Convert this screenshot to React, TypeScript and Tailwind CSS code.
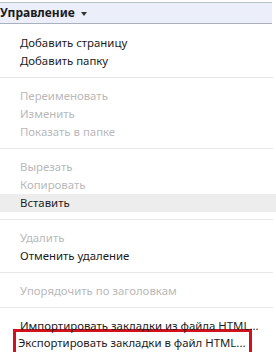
import React from "react";

type Item = { label: string; disabled?: boolean; hover?: boolean };

const groups: Item[][] = [
  [{ label: "Добавить страницу" }, { label: "Добавить папку" }],
  [
    { label: "Переименовать", disabled: true },
    { label: "Изменить", disabled: true },
    { label: "Показать в папке", disabled: true },
  ],
  [
    { label: "Вырезать", disabled: true },
    { label: "Копировать", disabled: true },
    { label: "Вставить", hover: true },
  ],
  [{ label: "Удалить", disabled: true }, { label: "Отменить удаление" }],
  [{ label: "Упорядочить по заголовкам", disabled: true }],
];

function Row({ item }: { item: Item }) {
  return (
    <div
      className={
        "h-[18px] leading-[18px] pl-[20px] whitespace-nowrap " +
        (item.disabled ? "text-[#b9b9b9] " : "text-[#1c1c1c] ") +
        (item.hover ? "bg-[#ededed]" : "")
      }
    >
      {item.label}
    </div>
  );
}

function Sep() {
  return <div className="mt-[7px] mb-[9px] h-px bg-[#e6e6e6] mr-[3px]" />;
}

export default function App() {
  return (
    <div
      className="w-[276px] h-[352px] overflow-hidden bg-white text-[11.4px]"
      style={{ fontFamily: '"Noto Sans", "Open Sans", sans-serif' }}
    >
      <div className="pt-[2px]">
        <div className="mr-[4px] h-[22px] border-t border-b border-t-[#b9c1cc] border-b-[#a9b1bc] bg-[#eceefa] flex items-center">
          <span className="font-bold text-[12px] text-[#1a1a1a] leading-none">Управление</span>
          <svg width="6" height="4" viewBox="0 0 6 4" className="ml-[6px] mt-[1px]">
            <path d="M0 0 L6 0 L3 4 Z" fill="#333" />
          </svg>
        </div>
      </div>
      <div className="pt-[10px]">
        {groups.map((g, i) => (
          <React.Fragment key={i}>
            {g.map((it) => (
              <Row key={it.label} item={it} />
            ))}
            <Sep />
          </React.Fragment>
        ))}
        <Row item={{ label: "Импортировать закладки из файла HTML..." }} />
        <div className="ml-[13px] w-[239px] h-[32px] border-[3px] border-[#d3111d] pl-[2px] leading-[22px] text-[#1c1c1c] whitespace-nowrap -mt-[6px]">
          Экспортировать закладки в файл HTML...
        </div>
      </div>
    </div>
  );
}
